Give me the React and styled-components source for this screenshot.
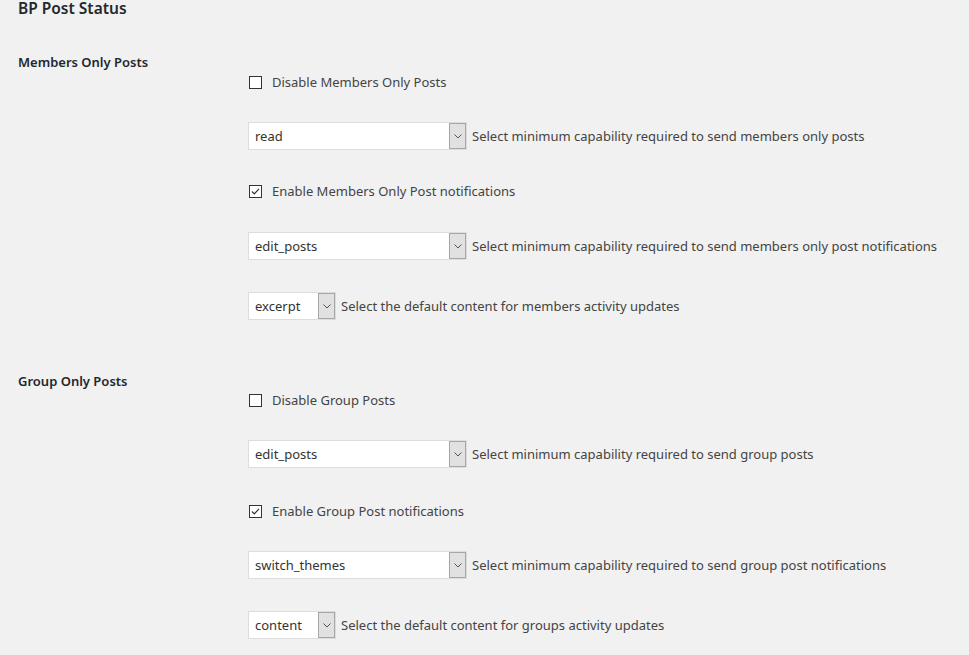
import React from 'react'
import styled, { createGlobalStyle } from 'styled-components'

const Global = createGlobalStyle`
  html, body { margin: 0; padding: 0; background: #f1f1f1; }
  body {
    font-family: "Noto Sans", "Open Sans", sans-serif;
    font-size: 13px;
    color: #444;
  }
`

const Page = styled.div`
  padding: 1px 0 0 18px;
  height: 655px;
  box-sizing: border-box;
  overflow: hidden;
`

const Title = styled.h2`
  margin: 0;
  font-size: 15.5px;
  line-height: 15px;
  font-weight: 600;
  color: #23282d;
`

const Section = styled.div`
  display: grid;
  grid-template-columns: 230px 1fr;
  margin-top: ${p => p.$top}px;
`

const SectionName = styled.div`
  font-size: 13px;
  font-weight: 600;
  color: #23282d;
  line-height: 18px;
`

const Fields = styled.div`
  display: flex;
  flex-direction: column;
  padding-top: ${p => p.$top}px;
`

const Row = styled.div`
  display: flex;
  align-items: center;
  gap: 5px;
  height: 28px;
  margin-bottom: ${p => p.$gap}px;
`

const CheckLabel = styled.label`
  display: flex;
  align-items: center;
  gap: 10px;
  padding-left: 1px;
`

const Box = styled.span`
  width: 11px;
  height: 11px;
  border: 1px solid #333;
  background: #fff;
  display: flex;
  align-items: center;
  justify-content: center;
`

const Select = styled.div`
  display: flex;
  align-items: center;
  width: ${p => p.$w}px;
  height: 28px;
  border: 1px solid #ddd;
  background: #fff;
  box-sizing: border-box;
`

const SelectValue = styled.span`
  flex: 1;
  padding-left: 6px;
  line-height: 26px;
  color: #333;
`

const Arrow = styled.span`
  width: 17px;
  height: 26px;
  background: #e1e1e1;
  border: 1px solid #a6a6a6;
  box-sizing: border-box;
  display: flex;
  align-items: center;
  justify-content: center;
`

const Hint = styled.span`
  color: #444;
  white-space: nowrap;
`

function Check({ checked, label }) {
  return (
    <CheckLabel>
      <Box>
        {checked && (
          <svg width="11" height="11" viewBox="0 0 11 11">
            <path d="M2 5.5 L4.3 7.8 L9 2.8" fill="none" stroke="#333" strokeWidth="1.2" />
          </svg>
        )}
      </Box>
      <span>{label}</span>
    </CheckLabel>
  )
}

function Dropdown({ value, w }) {
  return (
    <Select $w={w}>
      <SelectValue>{value}</SelectValue>
      <Arrow>
        <svg width="8" height="5" viewBox="0 0 8 5">
          <path d="M0.5 0.5 L4 4 L7.5 0.5" fill="none" stroke="#555" strokeWidth="1" />
        </svg>
      </Arrow>
    </Select>
  )
}

const sections = [
  {
    name: 'Members Only Posts',
    top: 37,
    pad: 15,
    gaps: [26, 27, 27, 32, 0],
    rows: [
      { type: 'check', label: 'Disable Members Only Posts', checked: false },
      { type: 'select', value: 'read', w: 219, hint: 'Select minimum capability required to send members only posts' },
      { type: 'check', label: 'Enable Members Only Post notifications', checked: true },
      { type: 'select', value: 'edit_posts', w: 219, hint: 'Select minimum capability required to send members only post notifications' },
      { type: 'select', value: 'excerpt', w: 88, hint: 'Select the default content for members activity updates' },
    ],
  },
  {
    name: 'Group Only Posts',
    top: 52,
    pad: 14,
    gaps: [26, 29, 26, 32, 0],
    rows: [
      { type: 'check', label: 'Disable Group Posts', checked: false },
      { type: 'select', value: 'edit_posts', w: 219, hint: 'Select minimum capability required to send group posts' },
      { type: 'check', label: 'Enable Group Post notifications', checked: true },
      { type: 'select', value: 'switch_themes', w: 219, hint: 'Select minimum capability required to send group post notifications' },
      { type: 'select', value: 'content', w: 88, hint: 'Select the default content for groups activity updates' },
    ],
  },
]

export default function App() {
  return (
    <Page>
      <Global />
      <Title>BP Post Status</Title>
      {sections.map(s => (
        <Section key={s.name} $top={s.top}>
          <SectionName>{s.name}</SectionName>
          <Fields $top={s.pad}>
            {s.rows.map((r, i) => (
              <Row key={i} $gap={s.gaps[i]}>
                {r.type === 'check' ? (
                  <Check checked={r.checked} label={r.label} />
                ) : (
                  <>
                    <Dropdown value={r.value} w={r.w} />
                    <Hint>{r.hint}</Hint>
                  </>
                )}
              </Row>
            ))}
          </Fields>
        </Section>
      ))}
    </Page>
  )
}
